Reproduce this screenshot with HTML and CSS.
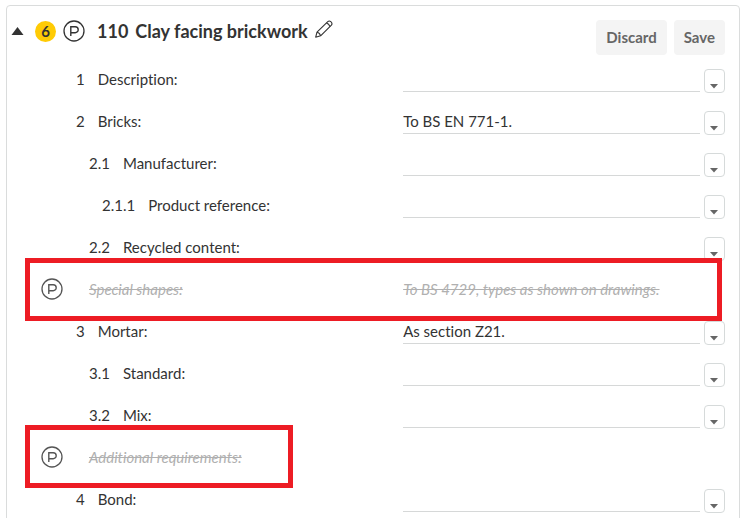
FILE: index.html
```html
<!DOCTYPE html>
<html lang="en">
<head>
<meta charset="utf-8">
<title>110 Clay facing brickwork</title>
<link rel="stylesheet" href="styles.css">
</head>
<body>
<svg class="defs" aria-hidden="true">
  <symbol id="p-mark" viewBox="0 0 22 22">
    <g fill="none" stroke="currentColor">
      <circle cx="11" cy="11" r="10" stroke-width="1.3"/>
      <path d="M7.8 16V10M7.1 6.7H12.2A3 3 0 0 1 12.2 12.7H7.8V6.7" stroke-width="1.4"/>
    </g>
  </symbol>
  <symbol id="caret" viewBox="0 0 8 5"><path d="M0 0H8L4 4.6Z" fill="currentColor"/></symbol>
</svg>
<main class="card">
  <header class="head">
    <button class="icon-btn collapse" aria-label="Collapse clause"><svg viewBox="0 0 12 8"><path d="M0 8L6 0L12 8Z" fill="currentColor"/></svg></button>
    <span class="badge">6</span>
    <svg class="mark" aria-hidden="true"><use href="#p-mark"/></svg>
    <h1 class="title"><span>110</span><span>Clay facing brickwork</span></h1>
    <button class="icon-btn pencil" aria-label="Edit title"><svg viewBox="0 0 18 18" fill="none" stroke="currentColor" stroke-width="1.1" stroke-linejoin="round"><path d="M.7 17.2L2 12.2L12.8 1.6Q14.2.3 15.8 1.7Q17.8 3.4 16.4 5.2L5.6 15.8Z"/><path d="M2 12.2Q4.8 12.8 5.6 15.8M11.4 3Q14 3.7 15 6.6"/></svg></button>
    <div class="actions"><button class="action">Discard</button><button class="action">Save</button></div>
  </header>
  <div class="row"><div class="name"><span>1</span><label for="f1">Description:</label></div><div class="value"><input id="f1"><button class="drop" aria-label="Description options"><svg><use href="#caret"/></svg></button></div></div>
  <div class="row"><div class="name"><span>2</span><label for="f2">Bricks:</label></div><div class="value"><input id="f2" value="To BS EN 771-1."><button class="drop" aria-label="Bricks options"><svg><use href="#caret"/></svg></button></div></div>
  <div class="row"><div class="name level-2"><span>2.1</span><label for="f3">Manufacturer:</label></div><div class="value"><input id="f3"><button class="drop" aria-label="Manufacturer options"><svg><use href="#caret"/></svg></button></div></div>
  <div class="row"><div class="name level-3"><span>2.1.1</span><label for="f4">Product reference:</label></div><div class="value"><input id="f4"><button class="drop" aria-label="Product reference options"><svg><use href="#caret"/></svg></button></div></div>
  <div class="row"><div class="name level-2"><span>2.2</span><label for="f5">Recycled content:</label></div><div class="value"><input id="f5"><button class="drop" aria-label="Recycled content options"><svg><use href="#caret"/></svg></button></div></div>
  <div class="row removed"><div class="name"><svg class="mark" aria-hidden="true"><use href="#p-mark"/></svg><del>Special shapes:</del></div><div class="value"><del>To BS 4729, types as shown on drawings.</del></div><div class="outline wide"></div></div>
  <div class="row"><div class="name"><span>3</span><label for="f6">Mortar:</label></div><div class="value"><input id="f6" value="As section Z21."><button class="drop" aria-label="Mortar options"><svg><use href="#caret"/></svg></button></div></div>
  <div class="row"><div class="name level-2"><span>3.1</span><label for="f7">Standard:</label></div><div class="value"><input id="f7"><button class="drop" aria-label="Standard options"><svg><use href="#caret"/></svg></button></div></div>
  <div class="row"><div class="name level-2"><span>3.2</span><label for="f8">Mix:</label></div><div class="value"><input id="f8"><button class="drop" aria-label="Mix options"><svg><use href="#caret"/></svg></button></div></div>
  <div class="row removed"><div class="name"><svg class="mark" aria-hidden="true"><use href="#p-mark"/></svg><del>Additional requirements:</del></div><div class="outline narrow"></div></div>
  <div class="row"><div class="name"><span>4</span><label for="f9">Bond:</label></div><div class="value"><input id="f9"><button class="drop" aria-label="Bond options"><svg><use href="#caret"/></svg></button></div></div>
</main>
</body>
</html>
```
FILE: styles.css
```css
* { box-sizing: border-box; }
body {
  margin: 0;
  padding: 5px 9px 0 6px;
  height: 100vh;
  overflow: hidden;
  background: #fff;
  color: #333;
  font-family: Lato, "Liberation Sans", sans-serif;
  font-size: 15px;
  line-height: 20px;
  font-variant-ligatures: none;
}
button, input { font: inherit; color: inherit; }
.defs { position: absolute; width: 0; height: 0; }
.card {
  border: 1px solid #dadcdc;
  border-radius: 4px;
  padding-bottom: 16px;
}
.head {
  display: flex;
  align-items: center;
  height: 52px;
  padding: 0 14px 2px 4px;
}
.icon-btn { display: flex; padding: 0; border: 0; background: none; cursor: pointer; }
.collapse svg { width: 13px; height: 8px; }
.badge {
  width: 21px;
  height: 21px;
  margin: 0 7px 0 11px;
  border-radius: 50%;
  background: #ffcb05;
  font-size: 15px;
  font-weight: 700;
  line-height: 20px;
  text-align: center;
}
.mark { flex: none; width: 22px; height: 22px; }
.title {
  display: flex;
  gap: 7px;
  margin: 0 7px 0 12px;
  font-size: 18px;
  font-weight: 700;
  line-height: 24px;
  white-space: nowrap;
}
.pencil { margin-bottom: 4px; }
.pencil svg { width: 18px; height: 18px; }
.actions { display: flex; gap: 7px; margin: 12px 0 0 auto; }
.action {
  height: 35px;
  padding: 0 10px;
  border: 0;
  border-radius: 4px;
  background: #f4f4f4;
  color: #666;
  font-size: 15px;
  font-weight: 700;
  cursor: pointer;
}
.row {
  position: relative;
  display: grid;
  grid-template-columns: 16fr 13fr;
  height: 42px;
  padding-right: 14px;
}
.name { display: flex; align-items: center; gap: 13px; padding-left: 69px; }
.level-2 { padding-left: 82px; }
.level-3 { padding-left: 95px; }
.value { display: flex; align-items: center; gap: 4px; }
.value input {
  flex: 1;
  min-width: 0;
  height: 26px;
  padding: 0;
  border: 0;
  border-bottom: 1px solid #d6d8d8;
  background: none;
  margin-top: 8px;
  align-self: flex-start;
}
.drop {
  display: flex;
  align-items: flex-end;
  justify-content: center;
  align-self: flex-start;
  width: 21px;
  height: 24px;
  margin-top: 11px;
  padding: 0 1px 3px 0;
  border: 1px solid #d6dada;
  border-radius: 4px;
  background: #fff;
  color: #666;
  cursor: pointer;
}
.drop svg { width: 8px; height: 5px; }
.removed { color: #b0b0b0; font-style: italic; }
.removed .name { gap: 26px; padding-left: 34px; }
.removed .mark { color: #555; }
.outline {
  position: absolute;
  top: -10px;
  bottom: -11px;
  left: 18px;
  border: 5px solid #ed1c24;
  pointer-events: none;
}
.wide { right: 17px; }
.narrow { width: 268px; top: -11px; bottom: -10px; }
```
